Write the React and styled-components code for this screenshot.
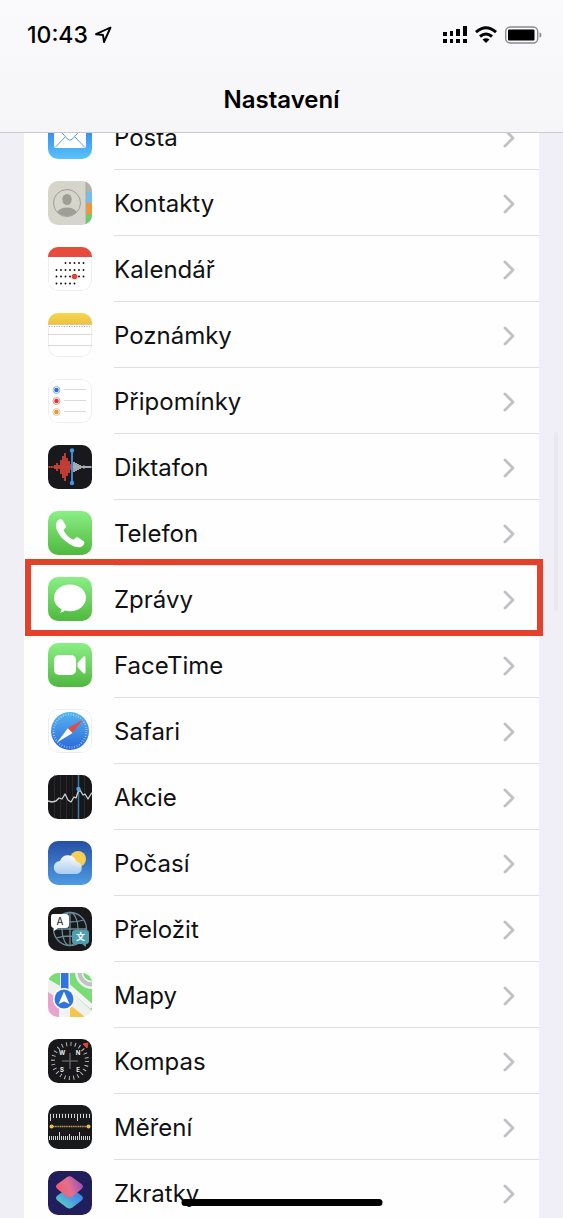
import React from 'react'
import styled, { createGlobalStyle } from 'styled-components'

const GlobalStyle = createGlobalStyle`
  * {
    box-sizing: border-box;
  }
  body {
    margin: 0;
    background-color: #f0eff5;
    font-family: Inter, "Liberation Sans", sans-serif;
    color: #111113;
  }
`;

const Screen = styled.div`
  position: relative;
  display: flex;
  flex-direction: column;
  height: 100vh;
  overflow: hidden;
`;

const Header = styled.header`
  flex: none;
  background: linear-gradient(#fafafc, #f6f6f8);
  border-bottom: 1px solid #c9c9cf;
`;

const StatusBar = styled.div`
  display: flex;
  align-items: center;
  justify-content: space-between;
  height: 70px;
  padding: 0 21px 0 27px;
`;

const StatusGroup = styled.div`
  display: flex;
  align-items: center;
  gap: ${(props) => props.$gap}px;
`;

const Clock = styled.time`
  font-size: 23px;
  font-weight: 500;
  line-height: 28px;
  color: #000;
`;

const Title = styled.h1`
  margin: 0;
  height: 62px;
  padding-top: 14px;
  text-align: center;
  font-size: 24px;
  font-weight: 600;
  line-height: 32px;
  color: #000;
`;

const Content = styled.main`
  flex: 1;
  min-height: 0;
  overflow: hidden;
  padding: 0 24px;
`;

/* the list is scrolled a little, its first row goes under the header */
const List = styled.ul`
  list-style: none;
  margin: -29px 0 0;
  padding: 0;
  background-color: #fefefe;
`;

const Item = styled.li`
  position: relative;
`;

const Row = styled.a`
  display: flex;
  align-items: center;
  gap: 22px;
  height: 66px;
  padding-left: 24px;
  color: inherit;
  text-decoration: none;
`;

const IconBox = styled.span`
  flex: none;
  display: flex;
  width: 44px;
  height: 44px;
  border-radius: 10px;
  overflow: hidden;
`;

const Label = styled.span`
  flex: 1;
  align-self: stretch;
  display: flex;
  align-items: center;
  justify-content: space-between;
  padding-right: 24px;
  padding-top: 2px;
  border-bottom: 1px solid #dfdfe2;
  font-size: 24px;
  line-height: 32px;
`;

const Highlight = styled.span`
  position: absolute;
  z-index: 1;
  top: -7px;
  right: -4px;
  bottom: -4px;
  left: 1px;
  border: 6px solid #e5402a;
  pointer-events: none;
`;

const ScrollThumb = styled.div`
  position: absolute;
  top: 432px;
  right: 5px;
  width: 4px;
  height: 179px;
  border-radius: 2px;
  background-color: #e9e8ee;
`;

const HomeIndicator = styled.div`
  position: absolute;
  bottom: 12px;
  left: 50%;
  width: 201px;
  height: 7px;
  border-radius: 4px;
  background-color: #000;
  transform: translateX(-50%);
`;

const Icon = ({ children }) => (
  <svg width="44" height="44" viewBox="0 0 44 44" fill="none" aria-hidden="true">
    {children}
  </svg>
);

const Gradient = ({ id, from, to }) => (
  <linearGradient id={id} x1="0" y1="0" x2="0" y2="1">
    <stop stopColor={from} />
    <stop offset="1" stopColor={to} />
  </linearGradient>
);

const Outline = () => <rect x=".5" y=".5" width="43" height="43" rx="9.5" stroke="#ededef" />;

const range = (count) => Array.from({ length: count }, (_, i) => i);

const MailIcon = () => (
  <Icon>
    <Gradient id="mail" from="#1e6fe8" to="#5bc2fa" />
    <rect width="44" height="44" fill="url(#mail)" />
    <rect x="6" y="9" width="32" height="24" rx="2" fill="#fff" />
    <path d="M7 10l12.500 14q2.500 2.500 5 0L37 10M7.500 32l9.500-10M36.500 32L27 22" stroke="#5a9fdf" strokeWidth="1" />
  </Icon>
);

const ContactsIcon = () => (
  <Icon>
    <rect width="44" height="44" fill="#d6d5cb" />
    <rect x="38" width="6" height="11" fill="#b2b1aa" />
    <rect x="38" y="11" width="6" height="11" fill="#72bdf2" />
    <rect x="38" y="22" width="6" height="11" fill="#f39635" />
    <rect x="38" y="33" width="6" height="11" fill="#64cf67" />
    <path d="M38 0v44" stroke="#aaa99f" />
    <clipPath id="person"><circle cx="19" cy="22" r="13" /></clipPath>
    <g clipPath="url(#person)" fill="#9f9d95">
      <ellipse cx="19" cy="18.500" rx="4.700" ry="5.500" />
      <ellipse cx="19" cy="34" rx="11" ry="7.500" />
    </g>
    <circle cx="19" cy="22" r="13.500" stroke="#9f9d95" />
  </Icon>
);

const CalendarIcon = () => (
  <Icon>
    <rect width="44" height="44" fill="#fff" />
    <Outline />
    <path d="M0 0h44v10H0z" fill="#e64b3e" />
    <g fill="#111">
      {range(5).map((i) => <circle key={i} cx={17.5 + i * 4.5} cy="16" r=".95" />)}
      {range(7).map((i) => <circle key={i} cx={8.5 + i * 4.5} cy="23" r=".95" />)}
      {range(7).map((i) => <circle key={i} cx={8.5 + i * 4.5} cy="29.500" r=".95" />)}
      {range(5).map((i) => <circle key={i} cx={8.5 + i * 4.5} cy="36.500" r=".95" />)}
    </g>
    <circle cx="26.500" cy="29.500" r="2.800" fill="#e4443a" />
  </Icon>
);

const NotesIcon = () => (
  <Icon>
    <Gradient id="notes" from="#f7d64e" to="#edc240" />
    <rect width="44" height="44" fill="#fff" />
    <Outline />
    <path d="M0 0h44v11H0z" fill="url(#notes)" />
    <path d="M0 11.500h44" stroke="#d8c790" />
    <path d="M1 13.500h42" stroke="#aaa" strokeDasharray="1 1.500" />
    <path d="M0 21.500h44M0 32.500h44" stroke="#d8d8da" />
  </Icon>
);

const RemindersIcon = () => (
  <Icon>
    <rect width="44" height="44" fill="#fff" />
    <Outline />
    {['#2f6fe6', '#dd3836', '#ee9438'].map((color, i) => (
      <g key={color}>
        <circle cx="8.500" cy={11 + i * 11} r="3.500" stroke={color} strokeOpacity=".5" />
        <circle cx="8.500" cy={11 + i * 11} r="2.300" fill={color} />
        <path d={`M16 ${10.5 + i * 11}h22`} stroke="#dadadd" />
      </g>
    ))}
  </Icon>
);

const VoiceMemosIcon = () => (
  <Icon>
    <rect width="44" height="44" fill="#19191d" />
    <path
      d="M1 22h1M3 22h1M5 21.500v1M7 20v4M9 18v8M11 20v4M13 15v14M15 11v22M17 8v28M19 13v18M21 16v12M23 19v6"
      stroke="#cf4238"
      strokeWidth="1.800"
    />
    <path d="M0 22h24" stroke="#cf4238" />
    <path d="M26 17v10M28 18v8M30 19v6M32 20v4M34 21v2M36 20.500v3M38 21v2M40 21v2M42 21v2" stroke="#c5ccd2" strokeWidth="1.600" />
    <path d="M24 22h20" stroke="#aeb3b8" />
    <path d="M24 6v32" stroke="#3e97e6" strokeWidth="1.800" />
    <circle cx="24" cy="5.500" r="2.200" fill="#3e97e6" />
    <circle cx="24" cy="38" r="2.200" fill="#3e97e6" />
  </Icon>
);

const PhoneIcon = () => (
  <Icon>
    <Gradient id="phone" from="#8aef85" to="#4fb83e" />
    <rect width="44" height="44" fill="url(#phone)" />
    <path
      d="M9 10.500C10.500 8 13 7 14.500 9l3 5c1 1.600.4 2.800-1 3.900-1 .8-1 1.500-.3 2.700 2 3.300 4.300 5.700 7.600 7.500 1.200.700 2 .6 2.800-.4 1.100-1.400 2.300-2 3.900-1l4.800 3.200c2 1.500 1 4-1.500 5.500-3.300 2-7.800.300-12.400-2.500C16.200 29.700 12.300 25.800 9.500 20.500 7.500 16.600 7.300 13.200 9 10.500z"
      fill="#fff"
    />
  </Icon>
);

const MessagesIcon = () => (
  <Icon>
    <Gradient id="messages" from="#8aef85" to="#4fb83e" />
    <rect width="44" height="44" fill="url(#messages)" />
    <path
      d="M22 7.500c9 0 16 5.900 16 13.300S31 34.300 22 34.300c-1.900 0-3.600-.2-5.200-.7-1.400 1.300-3.500 2.200-5.300 2.400 1-.9 1.900-2.200 2-3.800C8.900 29.900 6 25.700 6 20.800 6 13.400 13 7.500 22 7.500z"
      fill="#fff"
    />
  </Icon>
);

const FaceTimeIcon = () => (
  <Icon>
    <Gradient id="facetime" from="#8aef85" to="#4fb83e" />
    <rect width="44" height="44" fill="url(#facetime)" />
    <rect x="6" y="12" width="22" height="20" rx="5" fill="#fff" />
    <path d="M29.500 20l5.500-6q2.500-2 2.500 1v14q0 3-2.500 1l-5.500-6z" fill="#fff" />
  </Icon>
);

const SafariIcon = () => (
  <Icon>
    <Gradient id="safari" from="#56b5f1" to="#2b68d9" />
    <rect width="44" height="44" fill="#fff" />
    <Outline />
    <circle cx="22" cy="22" r="19" fill="url(#safari)" />
    <circle cx="22" cy="22" r="16.500" stroke="#c9e4fb" strokeWidth="2" strokeDasharray=".6 2" />
    <path d="M35 10.500L19.800 19.200l4.700 4.800z" fill="#e54b42" />
    <path d="M9 33.500l10.800-14.300 4.700 4.800z" fill="#fff" />
  </Icon>
);

const StocksIcon = () => (
  <Icon>
    <rect width="44" height="44" fill="#17171a" />
    <path d="M6.500 0v44M12.500 0v44M18.500 0v44M24.500 0v44M36.500 0v44" stroke="#2a2a2e" />
    <path d="M30.500 0v44" stroke="#397da8" strokeWidth="1.500" />
    <path
      d="M0 26l4 1 4-1 3-3 3 1 3-5 3 6 3 2 3-5 2 1 2-6 2-2 3 5 2-1 3 5 3-5 3-3"
      stroke="#d2d2d5"
      strokeWidth="1.300"
      strokeLinejoin="round"
    />
    <circle cx="30.500" cy="14" r="2.200" fill="#49a7e3" />
  </Icon>
);

const WeatherIcon = () => (
  <Icon>
    <Gradient id="sky" from="#264fa5" to="#4d9be3" />
    <Gradient id="cloud" from="#fff" to="#b0d0f2" />
    <rect width="44" height="44" fill="url(#sky)" />
    <circle cx="30" cy="18" r="8" fill="#f6cf53" />
    <path
      d="M12.500 33a6.500 6.500 0 01-.5-13A8.500 8.500 0 0128.300 20.500a6.400 6.400 0 01.7 12.500z"
      fill="url(#cloud)"
      fillOpacity=".95"
    />
  </Icon>
);

const TranslateIcon = () => (
  <Icon>
    <rect width="44" height="44" fill="#19191c" />
    <g stroke="#6b8a97" strokeWidth="1.300">
      <circle cx="22" cy="22" r="16.500" />
      <ellipse cx="22" cy="22" rx="8" ry="16.500" />
      <path d="M22 5v34M5.500 22h33M8 13q14 4 28 0M8 31q14-4 28 0" />
    </g>
    <path d="M5 7h13q3 0 3 3v8q0 3-3 3h-8l-4 3v-3H5q-2-1-2-3v-8q0-3 2-3z" fill="#fff" />
    <text x="12" y="18" textAnchor="middle" fontFamily="Inter, sans-serif" fontSize="10" fill="#111">A</text>
    <path d="M27 23h11q3 0 3 3v8q0 3-3 3v3l-4-3h-7q-3 0-3-3v-8q0-3 3-3z" fill="#4e9ead" />
    <text x="32.500" y="33" textAnchor="middle" fontFamily='"Noto Sans CJK SC", sans-serif' fontSize="9" fontWeight="700" fill="#fff">文</text>
  </Icon>
);

const MapsIcon = () => (
  <Icon>
    <rect width="44" height="44" fill="#eff0f0" />
    <path d="M0 0h12v13L0 6z" fill="#79dc74" />
    <path d="M22 0h22v38L22 18z" fill="#79dc74" />
    <path d="M0 19l11 7v18H0z" fill="#e8a2ce" />
    <path d="M22 32l15 12H22z" fill="#f5c747" />
    <path d="M14 29v15M20 13l24 21" stroke="#f4f4f4" strokeWidth="5" />
    <circle cx="44" cy="-1" r="17" fill="#f2f2f2" />
    <circle cx="44" cy="-1" r="12.500" stroke="#bfc3c1" strokeWidth="4" />
    <circle cx="44" cy="-1" r="9" fill="#79dc74" />
    <path d="M12 0h10v20H12z" fill="#f2f3f5" />
    <path d="M13 0h7.500v20H13z" fill="#2f74df" />
    <circle cx="16" cy="26" r="11" fill="#fff" />
    <circle cx="16" cy="26" r="9.500" fill="#2f74df" />
    <path d="M16 18.500l5.500 12.500L16 28.500 10.500 31z" fill="#fff" />
  </Icon>
);

const CompassIcon = () => (
  <Icon>
    <rect width="44" height="44" fill="#18181a" />
    <circle cx="22" cy="22" r="17" stroke="#b6b6ba" strokeWidth="4" strokeDasharray="1 3.450" />
    <path d="M22 14v16M14 22h16" stroke="#5e5e62" strokeWidth="1.500" />
    <path d="M40 4l-1 5-4-4z" fill="#e3443a" stroke="#e3443a" />
    <g fontFamily="Inter, sans-serif" fontSize="6" fontWeight="700" fill="#eee" textAnchor="middle">
      <text x="14" y="16">W</text>
      <text x="30" y="16">N</text>
      <text x="14" y="33">S</text>
      <text x="30" y="33">E</text>
    </g>
  </Icon>
);

const MeasureIcon = () => (
  <Icon>
    <rect width="44" height="44" fill="#18191b" />
    <path d="M0 9h44" stroke="#303136" strokeWidth="1" />
    <g stroke="#d5d5d8">
      {range(14).map((i) => (
        <path key={i} d={`M${2.5 + i * 3} 9v${i === 0 || i === 9 ? 7 : 4}`} />
      ))}
      {range(21).map((i) => (
        <path key={i} d={`M${1.5 + i * 2} 35v-${i === 5 || i === 15 ? 8 : i === 10 ? 6 : 4}`} />
      ))}
    </g>
    <path d="M3 21.500h38" stroke="#c49a43" strokeWidth="1.500" strokeDasharray="1.300 .5" />
    <circle cx="3.500" cy="21.500" r="2" fill="#f0bd4b" />
    <circle cx="40.500" cy="21.500" r="2" fill="#f0bd4b" />
  </Icon>
);

const ShortcutsIcon = () => (
  <Icon>
    <linearGradient id="lower" x1="0" y1="1" x2="1" y2="0">
      <stop stopColor="#63dfa8" />
      <stop offset=".5" stopColor="#4b9fe2" />
      <stop offset="1" stopColor="#386ee8" />
    </linearGradient>
    <linearGradient id="upper" x1="0" y1=".7" x2="1" y2=".4">
      <stop stopColor="#ee5a6a" />
      <stop offset=".5" stopColor="#e2708f" />
      <stop offset="1" stopColor="#9a4fb8" />
    </linearGradient>
    <rect width="44" height="44" fill="#211e5c" />
    <path d="M18.500 18q3-2 6 0l9 6.500q3 2.500 0 5l-9 7q-3 2-6 0l-9-7q-3-2.500 0-5z" fill="url(#lower)" />
    <path d="M18.500 6.500q3-2.500 6 0l9 6.500q3 2.500 0 5l-9 7.500q-3 2-6 0L9.500 18q-3-2.500 0-5z" fill="url(#upper)" />
  </Icon>
);

const apps = [
  { name: 'Pošta', icon: MailIcon },
  { name: 'Kontakty', icon: ContactsIcon },
  { name: 'Kalendář', icon: CalendarIcon },
  { name: 'Poznámky', icon: NotesIcon },
  { name: 'Připomínky', icon: RemindersIcon },
  { name: 'Diktafon', icon: VoiceMemosIcon },
  { name: 'Telefon', icon: PhoneIcon },
  { name: 'Zprávy', icon: MessagesIcon, highlighted: true },
  { name: 'FaceTime', icon: FaceTimeIcon },
  { name: 'Safari', icon: SafariIcon },
  { name: 'Akcie', icon: StocksIcon },
  { name: 'Počasí', icon: WeatherIcon },
  { name: 'Přeložit', icon: TranslateIcon },
  { name: 'Mapy', icon: MapsIcon },
  { name: 'Kompas', icon: CompassIcon },
  { name: 'Měření', icon: MeasureIcon },
  { name: 'Zkratky', icon: ShortcutsIcon },
];

const Chevron = () => (
  <svg width="12" height="20" viewBox="0 0 12 20" fill="none" aria-hidden="true">
    <path d="M2 2l8 8-8 8" stroke="#c1c1c5" strokeWidth="2.800" strokeLinecap="round" strokeLinejoin="round" />
  </svg>
);

const LocationArrow = () => (
  <svg width="18" height="18" viewBox="0 0 18 18" fill="none" aria-hidden="true">
    <path d="M16.500 1.500L2 8.200l7 .8 1 7z" stroke="#000" strokeWidth="1.900" strokeLinejoin="round" />
  </svg>
);

const SignalIcon = () => (
  <svg width="24" height="18" viewBox="0 0 24 18" aria-hidden="true">
    <path d="M0 6h4v4H0zM7 5h3v5H7zM13 3h4v7h-4zM20 0h4v10h-4zM0 13h4v4H0zM7 13h3v4H7zM13 13h4v4h-4zM20 13h4v4h-4z" />
  </svg>
);

const WifiIcon = () => (
  <svg width="22" height="18" viewBox="0 0 22 18" fill="none" aria-hidden="true">
    <path d="M1 6.200Q11-2.700 21 6.200M5 10.500q6-5 12 0" stroke="#000" strokeWidth="3" />
    <path d="M7.500 13.500q3.500-2.500 7 0L11 17z" fill="#000" />
  </svg>
);

const BatteryIcon = () => (
  <svg width="37" height="18" viewBox="0 0 37 18" fill="none" aria-hidden="true">
    <rect x=".7" y="1" width="32" height="16" rx="4.500" stroke="#8b8b8f" strokeWidth="1.400" />
    <rect x="3" y="3.500" width="26.500" height="11" rx="1" fill="#000" />
    <path d="M34.500 6.500q2 0 2 2.500t-2 2.500z" fill="#8b8b8f" />
  </svg>
);

const App = () => {
  return (
    <Screen>
      <GlobalStyle />

      <Header>
        <StatusBar>
          <StatusGroup $gap={6}>
            <Clock>10:43</Clock>
            <LocationArrow />
          </StatusGroup>
          <StatusGroup $gap={8}>
            <SignalIcon />
            <WifiIcon />
            <BatteryIcon />
          </StatusGroup>
        </StatusBar>
        <Title>Nastavení</Title>
      </Header>

      <Content>
        <List>
          {apps.map(({ name, icon: AppIcon, highlighted }) => (
            <Item key={name}>
              <Row href="#">
                <IconBox><AppIcon /></IconBox>
                <Label>
                  {name}
                  <Chevron />
                </Label>
              </Row>
              {highlighted && <Highlight />}
            </Item>
          ))}
        </List>
      </Content>

      <ScrollThumb />
      <HomeIndicator />
    </Screen>
  )
}

export default App
